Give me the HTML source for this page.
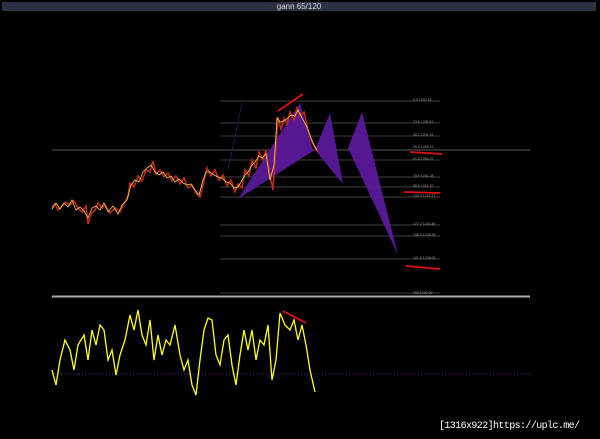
<!DOCTYPE html>
<html><head><meta charset="utf-8"><style>
html,body{margin:0;padding:0;background:#000;width:600px;height:439px;overflow:hidden}
.t{position:absolute;left:2px;top:2px;width:594px;height:9px;background:#2b3142;color:#ddd;font:8px "Liberation Sans",sans-serif;text-align:center;line-height:9px}
.u{position:absolute;left:439px;top:421px;color:#fff;font:10px "Liberation Mono",monospace;letter-spacing:-0.6px}
</style></head><body>
<div class="t">gann 65/120</div>
<svg width="600" height="439" style="position:absolute;left:0;top:0">
<g stroke="#555" stroke-width="0.7">
<line x1="220" y1="101" x2="440" y2="101"/><line x1="220" y1="123" x2="440" y2="123"/>
<line x1="220" y1="136" x2="440" y2="136"/><line x1="220" y1="160" x2="440" y2="160"/>
<line x1="220" y1="177" x2="440" y2="177"/><line x1="220" y1="187" x2="440" y2="187"/>
<line x1="220" y1="197" x2="440" y2="197"/><line x1="220" y1="225" x2="440" y2="225"/>
<line x1="220" y1="236" x2="440" y2="236"/><line x1="220" y1="259" x2="440" y2="259"/>
<line x1="220" y1="293" x2="440" y2="293"/>
</g>
<line x1="52" y1="150" x2="530" y2="150" stroke="#777" stroke-width="0.8"/>
<line x1="52" y1="296.5" x2="530" y2="296.5" stroke="#aaa" stroke-width="2"/>
<line x1="52" y1="374" x2="530" y2="374" stroke="#8040a0" stroke-width="0.8" stroke-dasharray="1,2"/>
<line x1="228" y1="170" x2="242" y2="103" stroke="#202060" stroke-width="0.8"/>
<g font-family="Liberation Sans" font-size="3.5" fill="#999">
<text x="413" y="101">0.0 1302.18</text><text x="413" y="123">23.6 1295.81</text>
<text x="413" y="136">38.2 1291.25</text><text x="413" y="148">50.0 1288.13</text>
<text x="413" y="160">61.8 1284.97</text><text x="413" y="177">78.6 1281.28</text>
<text x="413" y="187">88.6 1241.20</text><text x="413" y="197">100.0 1247.17</text>
<text x="413" y="225">127.2 1240.48</text><text x="413" y="236">138.2 1228.39</text>
<text x="413" y="259">161.8 1236.92</text><text x="413" y="294">200 1222.09</text>
</g>
<g fill="#5a1a9a" opacity="0.95">
<polygon points="238,199 300,103 313,151"/>
<polygon points="315,150 330,113 343,184"/>
<polygon points="348,148 362,112 398,255"/>
</g>
<polyline fill="none" stroke="#c02818" stroke-width="1.6" points="52,207 55,204 58,210 62,206 66,202 70,205 74,201 78,208 82,212 86,206 88,224 91,214 95,210 98,203 102,208 105,205 110,213 115,208 120,212 125,202 128,196 130,183 134,187 138,176 142,181 146,170 150,172 153,161 156,174 160,170 164,177 168,173 172,181 176,176 180,184 184,178 188,188 192,185 196,193 200,197 203,185 207,168 211,176 215,170 219,180 223,175 227,186 231,180 235,192 238,184 242,188 245,170 249,176 252,160 256,168 259,152 263,160 266,150 270,175 273,190 275,160 278,117 281,130 284,118 287,124 290,112 294,120 297,108 300,116 304,112 308,130 311,140 314,146 318,152"/>
<polyline fill="none" stroke="#f0d050" stroke-width="0.8" points="52,209 56,203 60,209 64,203 68,207 72,200 76,210 80,207 84,211 88,218 92,208 96,206 100,210 104,203 108,212 113,206 118,214 122,205 127,200 131,185 135,180 139,182 143,172 147,168 151,165 155,172 159,175 163,172 167,178 171,176 175,182 179,179 183,183 187,185 191,184 195,190 199,195 203,180 206,172 210,172 214,175 218,177 222,178 226,182 230,183 234,188 238,187 241,182 245,175 248,172 252,165 255,162 259,156 262,158 266,154 270,180 274,165 277,118 280,122 284,121 288,118 291,115 295,116 298,110 302,118 306,125 310,135 313,143 317,150"/>
<polyline fill="none" stroke="#ffff20" stroke-width="1.3" points="52,370 56,385 60,360 65,340 70,350 74,370 78,345 84,335 88,360 92,330 96,345 100,325 104,330 108,360 112,350 116,375 120,355 125,340 130,315 134,330 138,310 142,335 146,345 150,320 154,360 158,335 162,355 166,340 170,345 175,325 180,355 184,370 188,360 192,385 196,395 200,360 204,330 208,318 212,320 216,355 220,365 224,340 228,335 232,365 236,385 240,355 244,330 248,350 252,330 256,360 260,340 264,345 268,325 272,380 276,360 280,313 285,325 290,330 294,320 298,340 302,325 306,345 310,370 315,392"/>
<g stroke="#e01010" stroke-width="1.8">
<line x1="278" y1="111" x2="303" y2="94"/><line x1="410" y1="152" x2="442" y2="154"/>
<line x1="404" y1="192" x2="440" y2="193"/><line x1="406" y1="266" x2="440" y2="269"/>
<line x1="283" y1="311" x2="306" y2="323"/>
</g>
</svg>
<div class="u">[1316x922]https://uplc.me/</div>
</body></html>
